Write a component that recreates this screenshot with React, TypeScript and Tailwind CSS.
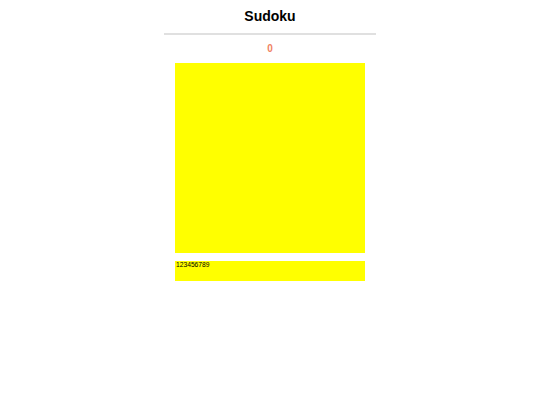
import React from "react";

const App = () => {
  return (
    <div className="min-h-[405px] bg-white font-['Liberation_Sans',Arial,sans-serif]">
      <div className="mx-auto w-[212px]">
        {/* Header */}
        <h1 className="h-[33px] pt-[7px] text-center text-[14px] font-bold leading-[18px] text-black">
          Sudoku
        </h1>
        <div className="h-[2px] bg-[#e0e0e0]"></div>

        {/* Score */}
        <div className="mt-[8px] text-center text-[10px] font-bold leading-[12px] text-[#f08262]">
          0
        </div>

        {/* Board */}
        <div className="mx-auto mt-[8px] h-[190px] w-[190px] bg-[#ffff00]"></div>

        {/* Number picker */}
        <div className="mx-auto mt-[8px] h-[20px] w-[190px] bg-[#ffff00] pl-[1px] text-[6.7px] leading-[7px] text-black">
          123456789
        </div>
      </div>
    </div>
  );
};

export default App;
